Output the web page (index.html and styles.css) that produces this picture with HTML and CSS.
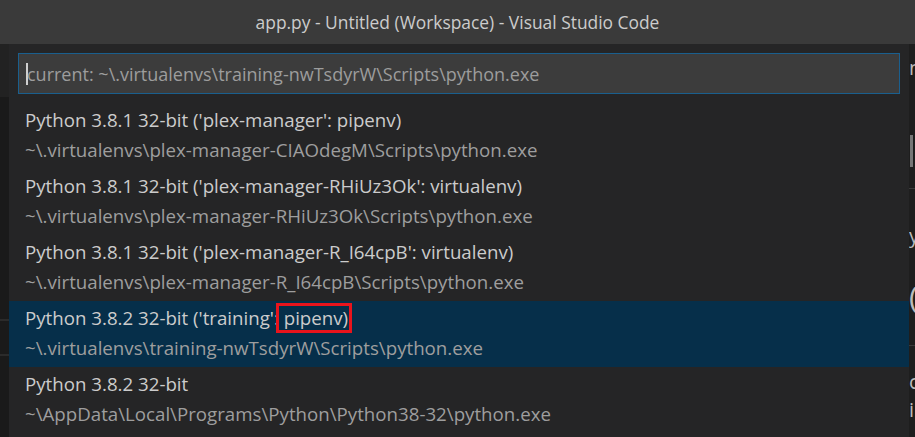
FILE: index.html
```html
<!DOCTYPE html>
<html>
<head>
<meta charset="utf-8">
<link rel="stylesheet" href="styles.css">
</head>
<body>
<div class="titlebar">app.py - Untitled (Workspace) - Visual Studio Code</div>
<div class="main">
  <div class="left-strip">
    <div class="ls-top"></div>
    <div class="ls-rest">
      <div class="ls-line l1"></div>
      <div class="ls-line l2"></div>
    </div>
  </div>
  <div class="quickpick">
    <div class="input-wrap">
      <div class="input"><span class="caret"></span><span class="placeholder">current: ~\.virtualenvs\training-nwTsdyrW\Scripts\python.exe</span></div>
    </div>
    <div class="list">
      <div class="item">
        <div class="label">Python 3.8.1 32-bit ('plex-manager': pipenv)</div>
        <div class="detail">~\.virtualenvs\plex-manager-CIAOdegM\Scripts\python.exe</div>
      </div>
      <div class="item">
        <div class="label">Python 3.8.1 32-bit ('plex-manager-RHiUz3Ok': virtualenv)</div>
        <div class="detail">~\.virtualenvs\plex-manager-RHiUz3Ok\Scripts\python.exe</div>
      </div>
      <div class="item">
        <div class="label">Python 3.8.1 32-bit ('plex-manager-R_I64cpB': virtualenv)</div>
        <div class="detail">~\.virtualenvs\plex-manager-R_I64cpB\Scripts\python.exe</div>
      </div>
      <div class="item selected">
        <div class="label">Python 3.8.2 32-bit ('training'<span class="mark">: pipenv)</span></div>
        <div class="detail">~\.virtualenvs\training-nwTsdyrW\Scripts\python.exe</div>
      </div>
      <div class="item">
        <div class="label">Python 3.8.2 32-bit</div>
        <div class="detail">~\AppData\Local\Programs\Python\Python38-32\python.exe</div>
      </div>
    </div>
  </div>
  <div class="right-strip">
    <span class="g g1">n</span>
    <div class="slider"></div>
    <div class="rs-line r1"></div>
    <span class="g g2">y</span>
    <span class="g g3">(</span>
    <div class="rs-line r2"></div>
    <span class="g g4">c</span>
    <span class="g g5">i</span>
  </div>
</div>
</body>
</html>
```
FILE: styles.css
```css
html, body {
  margin: 0;
  padding: 0;
}
body {
  width: 915px;
  height: 437px;
  overflow: hidden;
  background: #1e1e1e;
  font-family: "Open Sans", "Noto Sans", sans-serif;
}
.titlebar {
  height: 44px;
  background: #3a3a3a;
  color: #cccccc;
  font-size: 17.4px;
  line-height: 44px;
  text-align: center;
}
.main {
  display: flex;
  height: 393px;
}
.left-strip {
  width: 9px;
  display: flex;
  flex-direction: column;
}
.ls-top {
  height: 53px;
  background: #222222;
}
.ls-rest {
  flex: 1;
  background: #1a1a1a;
  position: relative;
}
.ls-line {
  position: absolute;
  left: 0;
  right: 0;
  height: 2px;
  background: #2b2b2b;
}
.l1 { top: 222px; }
.l2 { top: 257px; }
.quickpick {
  width: 900px;
  background: #252526;
  padding-top: 9px;
  display: flex;
  flex-direction: column;
}
.input-wrap {
  padding: 0 9px;
}
.input {
  height: 39px;
  background: #3c3c3c;
  border: 1px solid #1a5f8e;
  display: flex;
  align-items: center;
  padding-left: 7px;
}
.caret {
  width: 2px;
  height: 22px;
  background: #cfcfcf;
  margin-right: -1px;
}
.placeholder {
  color: #9d9d9d;
  font-size: 18px;
}
.list {
  margin-top: 9px;
}
.item {
  height: 66px;
  padding: 2px 0 0 16px;
  box-sizing: border-box;
  line-height: 30px;
  font-size: 18.7px;
  white-space: nowrap;
}
.item.selected {
  background: #062f4a;
}
.label {
  color: #cccccc;
}
.detail {
  color: #9e9e9e;
}
.mark {
  position: relative;
  display: inline-block;
  line-height: 30px;
}
.mark::after {
  content: "";
  position: absolute;
  left: 2px;
  right: -4px;
  top: 0;
  bottom: 0;
  border: 3px solid #e8141c;
}
.right-strip {
  flex: 1;
  background: #1e1e1e;
  position: relative;
  overflow: hidden;
  color: #bbbbbb;
  font-size: 20px;
}
.g {
  position: absolute;
  left: 0;
  line-height: 1;
}
.g1 { top: 14px; }
.g2 { top: 182px; }
.g3 { top: 238px; font-size: 30px; }
.g4 { top: 328px; }
.g5 { top: 356px; }
.slider {
  position: absolute;
  left: 1px;
  top: 91px;
  width: 3px;
  height: 32px;
  background: #777777;
}
.rs-line {
  position: absolute;
  left: 0;
  right: 0;
  height: 1px;
  background: #3a3a3a;
}
.r1 { top: 144px; }
.r2 { top: 301px; }
```
